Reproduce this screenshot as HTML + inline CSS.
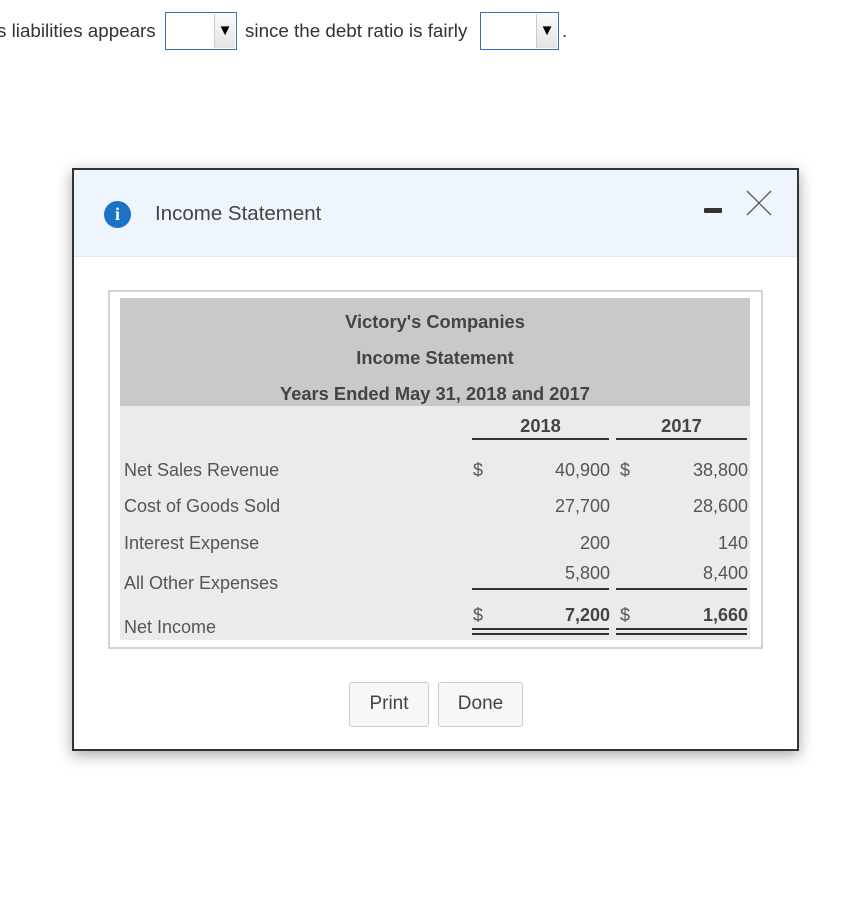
<!DOCTYPE html>
<html><head><meta charset="utf-8"><style>
*{margin:0;padding:0;box-sizing:border-box}
body{width:864px;height:918px;background:#fff;position:relative;overflow:hidden;font-family:"Liberation Sans",Arial,sans-serif;color:#333}
.a{position:absolute;white-space:nowrap}
.t{font-size:18.8px;color:#333}
.sel{position:absolute;border:1px solid #3b6fb6;background:#fff}
.sel .b{position:absolute;right:1px;top:1px;bottom:1px;width:21px;background:linear-gradient(#fafafa,#e4e4e4);border-left:1px solid #ccc;font-size:15px;text-align:center;line-height:34px;color:#000}
.r{font-size:18px;color:#555}
.n{font-size:18px;color:#555;text-align:right}
.hd{font-size:18.3px;font-weight:bold;color:#444;text-align:center}
.ln{position:absolute;height:2px;background:#333}
.btn{position:absolute;border:1px solid #ccc;border-radius:3px;background:#f7f7f7;font-size:19px;color:#444;text-align:center;line-height:42px}
</style></head><body>
<div class="a t" style="left:-3px;top:20px">s liabilities appears</div>
<div class="sel" style="left:165px;top:12px;width:72px;height:38px"><div class="b">▼</div></div>
<div class="a t" style="left:245px;top:20px">since the debt ratio is fairly</div>
<div class="sel" style="left:480px;top:12px;width:79px;height:38px"><div class="b">▼</div></div>
<div class="a t" style="left:562px;top:20px">.</div>

<div class="a" style="left:72px;top:168px;width:727px;height:583px;border:2px solid #333;background:#fff;box-shadow:0 4px 14px rgba(0,0,0,.35)">
  <div class="a" style="left:0;top:0;width:723px;height:87px;background:#eff5fc;border-bottom:1px solid #dce8f5"></div>
  <div class="a" style="left:30px;top:31px;width:27px;height:27px;border-radius:50%;background:#1b72c6;color:#fff;font:bold 18px 'Liberation Serif',serif;text-align:center;line-height:27px">i</div>
  <div class="a" style="left:81px;top:32px;font-size:20.5px;color:#444">Income Statement</div>
  <div class="a" style="left:630px;top:38px;width:18px;height:5px;background:#333;border-radius:1px"></div>
  <svg class="a" style="left:672px;top:20px" width="26" height="26" viewBox="0 0 26 26"><path d="M1 1L25 25M25 1L1 25" stroke="#555" stroke-width="1.3" fill="none"/></svg>

  <div class="a" style="left:34px;top:120px;width:655px;height:359px;border:2px solid #d2d2d2"></div>
  <div class="a" style="left:46px;top:128px;width:630px;height:108px;background:#c9c9c9"></div>
  <div class="a" style="left:46px;top:236px;width:630px;height:234px;background:#ebebeb"></div>

  <div class="a hd" style="left:46px;width:630px;top:141px">Victory's Companies</div>
  <div class="a hd" style="left:46px;width:630px;top:177px">Income Statement</div>
  <div class="a hd" style="left:46px;width:630px;top:213px">Years Ended May 31, 2018 and 2017</div>
  <div class="a hd" style="left:398px;width:137px;top:245px">2018</div>
  <div class="a hd" style="left:542px;width:131px;top:245px">2017</div>
  <div class="ln" style="left:398px;width:137px;top:268px"></div>
  <div class="ln" style="left:542px;width:131px;top:268px"></div>

  <div class="a r" style="left:50px;top:290px">Net Sales Revenue</div>
  <div class="a r" style="left:50px;top:326px">Cost of Goods Sold</div>
  <div class="a r" style="left:50px;top:363px">Interest Expense</div>
  <div class="a r" style="left:50px;top:403px">All Other Expenses</div>
  <div class="a r" style="left:50px;top:447px">Net Income</div>

  <div class="a r" style="left:399px;top:290px">$</div>
  <div class="a n" style="left:420px;width:116px;top:290px">40,900</div>
  <div class="a r" style="left:546px;top:290px">$</div>
  <div class="a n" style="left:560px;width:114px;top:290px">38,800</div>
  <div class="a n" style="left:420px;width:116px;top:326px">27,700</div>
  <div class="a n" style="left:560px;width:114px;top:326px">28,600</div>
  <div class="a n" style="left:420px;width:116px;top:363px">200</div>
  <div class="a n" style="left:560px;width:114px;top:363px">140</div>
  <div class="a n" style="left:420px;width:116px;top:393px">5,800</div>
  <div class="a n" style="left:560px;width:114px;top:393px">8,400</div>
  <div class="ln" style="left:398px;width:137px;top:418px"></div>
  <div class="ln" style="left:542px;width:131px;top:418px"></div>
  <div class="a r" style="left:399px;top:435px">$</div>
  <div class="a n" style="left:420px;width:116px;top:435px;font-weight:bold;color:#444">7,200</div>
  <div class="a r" style="left:546px;top:435px">$</div>
  <div class="a n" style="left:560px;width:114px;top:435px;font-weight:bold;color:#444">1,660</div>
  <div class="ln" style="left:398px;width:137px;top:458px"></div>
  <div class="ln" style="left:542px;width:131px;top:458px"></div>
  <div class="ln" style="left:398px;width:137px;top:463px"></div>
  <div class="ln" style="left:542px;width:131px;top:463px"></div>

  <div class="btn" style="left:275px;top:512px;width:80px;height:45px">Print</div>
  <div class="btn" style="left:364px;top:512px;width:85px;height:45px">Done</div>
</div>
</body></html>
